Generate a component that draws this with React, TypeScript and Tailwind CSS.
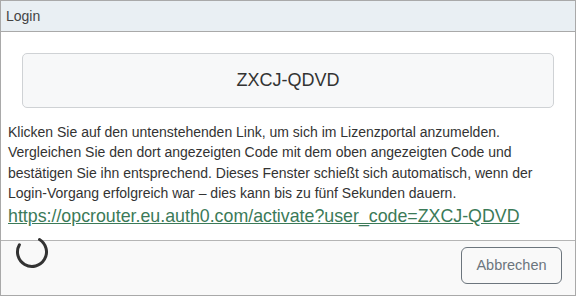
const LINK = "https://opcrouter.eu.auth0.com/activate?user_code=ZXCJ-QDVD";

const Spinner = () => (
  <svg width="34" height="34" viewBox="0 0 34 34" fill="none">
    <path
      d="M24.5 4.5 A14.5 14.5 0 1 1 4.4 9.7"
      stroke="#333"
      strokeWidth="3"
      strokeLinecap="round"
    />
  </svg>
);

export default function App() {
  return (
    <div
      className="w-[576px] h-[296px] border border-[#a9a9a9] flex flex-col bg-white text-[#333]"
      style={{ fontFamily: '"Liberation Sans", Arial, sans-serif' }}
    >
      {/* Title bar */}
      <div className="h-[31px] shrink-0 bg-[#e9eff3] border-b border-[#a9a9a9] flex items-center px-[5px] text-[14px] text-[#444]">
        Login
      </div>

      {/* Body */}
      <div className="flex-1 px-[7px]">
        <div className="mx-[14px] mt-[21px] h-[55px] rounded-[5px] border border-[#cfd2d5] bg-[#f7f8f9] flex items-center justify-center text-[18px] text-[#333]">
          ZXCJ-QDVD
        </div>
        <p className="mt-[14px] text-[14px] leading-[20.3px]">
          Klicken Sie auf den untenstehenden Link, um sich im Lizenzportal anzumelden.
          Vergleichen Sie den dort angezeigten Code mit dem oben angezeigten Code und
          bestätigen Sie ihn entsprechend. Dieses Fenster schießt sich automatisch, wenn der
          Login-Vorgang erfolgreich war – dies kann bis zu fünf Sekunden dauern.
        </p>
        <a
          href={LINK}
          className="block text-[17.8px] leading-[26px] text-[#3b7a58] underline"
        >
          {LINK}
        </a>
      </div>

      {/* Footer */}
      <div className="h-[55px] shrink-0 border-t border-[#b5b5b5] bg-[#f9f9f9] flex items-start justify-between pl-[14px] pr-[13px]">
        <div className="-mt-[6px]">
          <Spinner />
        </div>
        <button className="mt-[6px] w-[101px] h-[37px] rounded-[6px] border border-[#6c757d] text-[#6c757d] text-[14.5px] bg-transparent">
          Abbrechen
        </button>
      </div>
    </div>
  );
}
